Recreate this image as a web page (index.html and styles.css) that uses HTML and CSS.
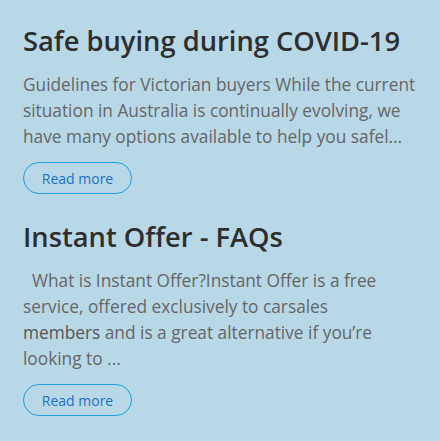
FILE: index.html
```html
<!DOCTYPE html>
<html lang="en">
<head>
<meta charset="utf-8">
<title>Articles</title>
<link rel="stylesheet" href="styles.css">
</head>
<body>
<div class="list">
  <article class="card">
    <h2 class="title">Safe buying during COVID-19</h2>
    <p class="excerpt">Guidelines for Victorian buyers While the current situation in Australia is continually evolving, we have many options available to help you safel...</p>
    <a class="btn" href="#">Read more</a>
  </article>
  <article class="card">
    <h2 class="title">Instant Offer - FAQs</h2>
    <p class="excerpt">&nbsp;&nbsp;What is Instant Offer?Instant Offer is a free service, offered exclusively to carsales<br><span class="em">members</span> and is a great alternative if you’re looking to ...</p>
    <a class="btn" href="#">Read more</a>
  </article>
</div>
</body>
</html>
```
FILE: styles.css
```css
html, body {
  margin: 0;
  padding: 0;
}
body {
  background: #b8d8e8;
  font-family: "Open Sans", "Noto Sans", sans-serif;
  width: 440px;
  height: 441px;
  overflow: hidden;
}
.list {
  display: flex;
  flex-direction: column;
  gap: 25px;
  padding: 23px 20px 0 23px;
}
.card {
  display: flex;
  flex-direction: column;
  align-items: flex-start;
}
.title {
  margin: 0;
  font-size: 27.3px;
  line-height: 36px;
  font-weight: 550;
  color: #2e2e2e;
}
.excerpt {
  margin: 13px 0 12px 0;
  font-size: 17.3px;
  line-height: 26px;
  color: #666;
}
.em {
  font-weight: 500;
  color: #555;
}
.btn {
  display: flex;
  align-items: center;
  justify-content: center;
  box-sizing: border-box;
  width: 109px;
  height: 32px;
  border: 1.5px solid #1e9fdc;
  border-radius: 16px;
  color: #1b6fc2;
  font-size: 14px;
  text-decoration: none;
}
```
